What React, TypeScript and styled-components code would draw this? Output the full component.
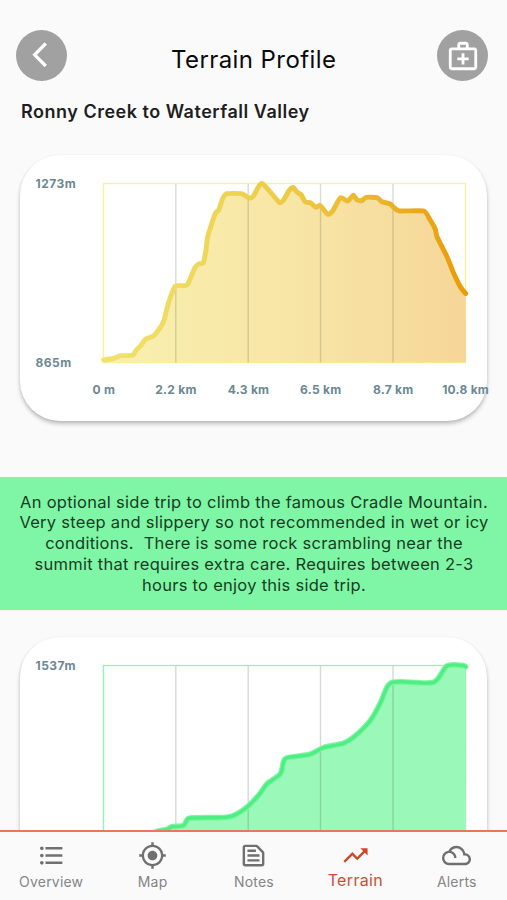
import React from "react";
import styled, { createGlobalStyle } from "styled-components";
import {
  MdFormatListBulleted,
  MdMyLocation,
  MdOutlineTextSnippet,
  MdTrendingUp,
  MdOutlineFilterDrama,
  MdOutlineMedicalServices,
} from "react-icons/md";

const GlobalStyle = createGlobalStyle`
  *, *::before, *::after { box-sizing: border-box; }
  body { margin: 0; background: #fafafa; font-family: Inter, "Liberation Sans", sans-serif; }
`;

const Screen = styled.div`
  width: 507px;
  height: 900px;
  display: flex;
  flex-direction: column;
  background: #fafafa;
  overflow: hidden;
`;

const StatusBar = styled.div`
  flex: none;
  height: 30px;
`;

const Header = styled.header`
  flex: none;
  height: 52px;
  padding: 0 18.6px 0 16px;
  display: flex;
  justify-content: space-between;
`;

const RoundButton = styled.button`
  width: 51px;
  height: 51px;
  padding: 0;
  border: 0;
  border-radius: 50%;
  background: #a1a1a1;
  color: #fff;
  display: flex;
  align-items: center;
  justify-content: center;
`;

const Title = styled.h1`
  margin: 14px 0 0;
  padding-left: 3px;
  font-size: 24px;
  line-height: 32px;
  font-weight: 400;
  letter-spacing: 0.42px;
  color: #0a0a0a;
`;

const Content = styled.main`
  flex: 1;
  min-height: 0;
  overflow: hidden;
`;

const RouteName = styled.h2`
  margin: 17.5px 0 0 21px;
  font-size: 18px;
  line-height: 24px;
  font-weight: 600;
  letter-spacing: 0.51px;
  color: #1e1e1e;
`;

const Card = styled.section<{ $top: number }>`
  height: 266px;
  margin: ${(p) => p.$top}px 20px 0;
  border-radius: 40px;
  background: #fff;
  box-shadow: 0 3px 4px rgba(0, 0, 0, 0.22), 0 1px 3px rgba(0, 0, 0, 0.08);
`;

const Chart = styled.svg`
  display: block;
  width: 467px;
  height: 266px;
  overflow: visible;
`;

const AxisLabel = styled.text<{ $wide?: boolean }>`
  font-family: Inter, "Liberation Sans", sans-serif;
  font-size: 12px;
  font-weight: 700;
  letter-spacing: ${(p) => (p.$wide ? 0.5 : 0.25)}px;
  fill: #6b8894;
`;

const Note = styled.p`
  height: 133px;
  margin: 56px 0 0;
  padding: 15px 0 0 1px;
  background: #7ff6a5;
  color: #173d24;
  font-size: 16.5px;
  line-height: 20.8px;
  letter-spacing: 0.27px;
  text-align: center;
  white-space: pre;
`;

const TabBar = styled.nav`
  flex: none;
  height: 70px;
  border-top: 2px solid #ee7658;
  background: #fafafa;
  display: grid;
  grid-template-columns: repeat(5, 1fr);
`;

const Tab = styled.a<{ $active?: boolean }>`
  display: flex;
  flex-direction: column;
  align-items: center;
  padding: 9px 0 0 1px;
  color: ${(p) => (p.$active ? "#cf472a" : "#707070")};
`;

const TabLabel = styled.span<{ $active?: boolean }>`
  margin-top: ${(p) => (p.$active ? 0 : 2)}px;
  font-size: ${(p) => (p.$active ? 16 : 14)}px;
  line-height: 20px;
  letter-spacing: ${(p) => (p.$active ? 0.35 : 0.2)}px;
  color: ${(p) => (p.$active ? "#d14d31" : "#858585")};
`;

type Point = [number, number];

const mainRoute: Point[] = [
  [83, 205], [93, 203.5], [100, 200.7], [112, 200.3], [116, 194.5], [120, 191], [125.2, 184],
  [133, 181], [139.5, 173], [143.5, 165.7], [146.2, 154.3], [149.5, 143.3], [155, 131], [166.5, 130],
  [174.5, 112.5], [178, 109], [182.8, 107.7], [185.5, 95], [187.2, 81.5], [194.5, 59],
  [198.2, 55], [202.2, 43.5], [206.2, 38.7], [221, 38.7], [228.7, 43], [233, 41], [241.5, 28.4],
  [259, 47.5], [264.8, 42.3], [268.2, 36], [272.5, 32.5], [276.5, 37], [280.8, 40],
  [284.8, 47], [289.8, 47.7], [295.5, 52.3], [299.8, 50.5], [307.2, 59.3], [312.5, 55.5],
  [319.8, 42.7], [327.2, 46], [332.8, 40.2], [336.5, 45], [341.5, 45.7], [345.5, 42.3],
  [356.5, 42.7], [361.5, 46.7], [369.8, 49], [373.2, 52.3], [378.8, 56], [403.2, 56],
  [409.2, 64.3], [414.8, 74.3], [416.5, 81.7], [426.5, 101.7], [433.2, 118.3],
  [439.8, 131.7], [445.2, 138.5],
];

const sideTrip: Point[] = [
  [83, 206], [118, 200], [138, 194], [146, 192.5], [152, 189.7], [162.8, 188.7], [166.2, 183.7],
  [171.2, 181], [206.2, 180.3], [217.8, 176.3], [228.5, 168.5], [239.8, 156.3], [246.5, 147],
  [259.8, 137], [263.2, 124.7], [267.2, 120.7], [289.8, 117.3], [303.2, 110.7],
  [323.2, 106.3], [333.2, 100.3], [349.8, 83.7], [359.8, 66.3], [366.5, 50.3], [371.5, 45.5],
  [382, 44.8], [413.2, 45.3], [426.5, 29], [441.5, 28.5], [445, 29.7],
];

const smoothPath = (points: Point[], tension: number) =>
  points.slice(1).reduce((d, point, i) => {
    const start = points[i];
    const before = points[i - 1] ?? start;
    const after = points[i + 2] ?? point;
    const c1 = [start[0] + (point[0] - before[0]) * tension, start[1] + (point[1] - before[1]) * tension];
    const c2 = [point[0] - (after[0] - start[0]) * tension, point[1] - (after[1] - start[1]) * tension];
    return `${d} C${c1.join(" ")} ${c2.join(" ")} ${point.join(" ")}`;
  }, `M${points[0].join(" ")}`);

interface ProfileProps {
  id: string;
  points: Point[];
  high: string;
  low?: string;
  distances?: string[];
  frame: string;
  grid: string;
  line: string[];
  fill: string[];
  halo?: string;
}

const GRID_X = [155.8, 228.2, 300.5, 373];
const LABEL_X = [83.8, 155.9, 228.6, 300.7, 373.2, 445.6];

function ElevationProfile({ id, points, high, low, distances = [], frame, grid, line, fill, halo }: ProfileProps) {
  const path = smoothPath(points, halo ? 0.14 : 0.1);
  const stops = (colors: string[]) =>
    colors.map((color, i) => <stop key={i} offset={i / (colors.length - 1)} stopColor={color} />);
  return (
    <Chart viewBox="0 0 467 266">
      <defs>
        <linearGradient id={`${id}-line`} gradientUnits="userSpaceOnUse" x1="83" x2="445" y1="0" y2="0">
          {stops(line)}
        </linearGradient>
        <linearGradient id={`${id}-fill`} gradientUnits="userSpaceOnUse" x1="83" x2="445" y1="0" y2="0">
          {stops(fill)}
        </linearGradient>
      </defs>
      <rect x="83.5" y="28.5" width="362" height="179" fill="none" stroke={frame} strokeWidth="1.3" />
      <g transform="translate(0.5 0)">
        <path d={`${path} L445.5 207.5 L83 207.5 Z`} fill={`url(#${id}-fill)`} />
      </g>
      {GRID_X.map((x) => (
        <path key={x} d={`M${x} 29V207.5`} stroke={grid} strokeWidth="1.4" />
      ))}
      <g transform="translate(0.5 0)" fill="none" strokeLinecap="round" strokeLinejoin="round">
        {halo && <path d={path} stroke={halo} strokeWidth="5.8" />}
        <path d={path} stroke={`url(#${id}-line)`} strokeWidth={halo ? 3.4 : 4.9} />
      </g>
      <AxisLabel x="15.5" y="33.3" $wide>{high}</AxisLabel>
      {low && <AxisLabel x="15.5" y="212" $wide>{low}</AxisLabel>}
      {distances.map((label, i) => (
        <AxisLabel key={label} x={LABEL_X[i]} y="238.6" textAnchor="middle">{label}</AxisLabel>
      ))}
    </Chart>
  );
}

const tabs = [
  { label: "Overview", Icon: MdFormatListBulleted },
  { label: "Map", Icon: MdMyLocation },
  { label: "Notes", Icon: MdOutlineTextSnippet },
  { label: "Terrain", Icon: MdTrendingUp, active: true },
  { label: "Alerts", Icon: MdOutlineFilterDrama },
];

const noteText = [
  "An optional side trip to climb the famous Cradle Mountain.",
  "Very steep and slippery so not recommended in wet or icy",
  "conditions.  There is some rock scrambling near the",
  "summit that requires extra care. Requires between 2-3",
  "hours to enjoy this side trip.",
].join("\n");

export default function App() {
  return (
    <Screen>
      <GlobalStyle />
      <StatusBar />
      <Header>
        <RoundButton aria-label="Back">
          <svg width="51" height="51" viewBox="0 0 51 51" fill="none" stroke="currentColor" strokeWidth="3.2">
            <path d="M29.8 13.5 18.6 24.8 29.8 36" />
          </svg>
        </RoundButton>
        <Title>Terrain Profile</Title>
        <RoundButton aria-label="First aid">
          <MdOutlineMedicalServices size={34} />
        </RoundButton>
      </Header>
      <Content>
        <RouteName>Ronny Creek to Waterfall Valley</RouteName>
        <Card $top={31}>
          <ElevationProfile
            id="main"
            points={mainRoute}
            high="1273m"
            low="865m"
            distances={["0 m", "2.2 km", "4.3 km", "6.5 km", "8.7 km", "10.8 km"]}
            frame="#fdee96"
            grid="rgba(90, 90, 60, 0.22)"
            line={["#f1e26c", "#efd85c", "#edcb45", "#ecb52b", "#e99b08"]}
            fill={["#f8f0b0", "#f8ebaa", "#f8e6a6", "#f6dfa0", "#f6d698"]}
          />
        </Card>
        <Note>{noteText}</Note>
        <Card $top={27}>
          <ElevationProfile
            id="side"
            points={sideTrip}
            high="1537m"
            frame="#85fbad"
            grid="rgba(70, 80, 70, 0.22)"
            line={["#4fee83", "#4fee83"]}
            fill={["#9af9b9", "#9af9b9"]}
            halo="#7df6a4"
          />
        </Card>
      </Content>
      <TabBar>
        {tabs.map(({ label, Icon, active }) => (
          <Tab key={label} $active={active}>
            <Icon size={29} />
            <TabLabel $active={active}>{label}</TabLabel>
          </Tab>
        ))}
      </TabBar>
    </Screen>
  );
}
